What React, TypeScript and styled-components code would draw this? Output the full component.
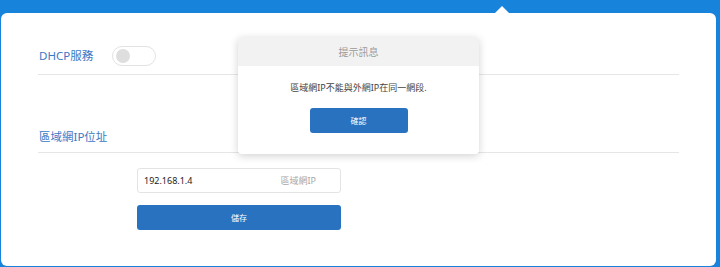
import * as React from "react";
import { FC } from "react";
import styled, { createGlobalStyle } from "styled-components";

const GlobalStyle = createGlobalStyle`
  html, body {
    margin: 0;
    padding: 0;
    background: #1883db;
  }

  body {
    font-family: "Noto Sans", "Noto Sans CJK TC", sans-serif;
  }
`;

const Page = styled.div`
  position: relative;
  height: 267px;
  box-sizing: border-box;
  padding: 13px 4px 1px 1px;
`;

const Caret = styled.div`
  position: absolute;
  left: 495px;
  top: 6px;
  width: 0;
  height: 0;
  border-left: 7px solid transparent;
  border-right: 7px solid transparent;
  border-bottom: 7px solid #ffffff;
`;

const Card = styled.div`
  height: 100%;
  box-sizing: border-box;
  background: #ffffff;
  border-radius: 6px;
  padding: 33px 37px 0 37px;
`;

const Row = styled.div<{ $gap?: number }>`
  display: flex;
  align-items: center;
  gap: ${(p) => p.$gap ?? 0}px;
  padding-bottom: 8px;
  border-bottom: 1px solid #e6e6e6;
`;

const Section = styled.div`
  margin-top: 55px;
`;

const Label = styled.span`
  color: #3b79c4;
  font-size: 11.5px;
  line-height: 14px;
  padding-left: 1px;
`;

const Toggle = styled.div`
  position: relative;
  width: 44px;
  height: 20px;
  box-sizing: border-box;
  border: 1px solid #e2e2e2;
  border-radius: 10px;
  background: #ffffff;
`;

const Knob = styled.div`
  position: absolute;
  left: 3px;
  top: 2px;
  width: 14px;
  height: 14px;
  border-radius: 50%;
  background: #dedede;
`;

const Form = styled.div`
  display: flex;
  flex-direction: column;
  gap: 12px;
  width: 204px;
  margin: 15px 0 0 99px;
`;

const Field = styled.div`
  display: flex;
  align-items: center;
  justify-content: space-between;
  height: 25px;
  box-sizing: border-box;
  border: 1px solid #e4e4e4;
  border-radius: 3px;
  padding: 0 24px 0 6px;
  font-size: 9px;
`;

const Value = styled.span`
  color: #222222;
`;

const Hint = styled.span`
  color: #a8a8a8;
`;

const Button = styled.button<{ $width?: number }>`
  width: ${(p) => (p.$width ? `${p.$width}px` : "100%")};
  height: 25px;
  border: none;
  border-radius: 3px;
  background: #2872c0;
  color: #ffffff;
  font-family: inherit;
  font-size: 8px;
  padding: 0;
`;

const Dialog = styled.div`
  position: absolute;
  left: 238px;
  top: 37px;
  width: 241px;
  height: 117px;
  background: #ffffff;
  border-radius: 4px;
  box-shadow: 0 2px 8px rgba(0, 0, 0, 0.18);
  overflow: hidden;
  display: flex;
  flex-direction: column;
`;

const DialogHead = styled.div`
  height: 29px;
  display: flex;
  align-items: center;
  justify-content: center;
  background: #f2f2f2;
  color: #9a9a9a;
  font-size: 10px;
`;

const DialogBody = styled.div`
  flex: 1;
  display: flex;
  flex-direction: column;
  align-items: center;
  padding-top: 15px;
  gap: 13px;
`;

const Message = styled.p`
  margin: 0;
  color: #444444;
  font-size: 9px;
  line-height: 14px;
`;

const App: FC = () => {
  return (
    <Page>
      <GlobalStyle />
      <Caret />
      <Card>
        <Row $gap={19}>
          <Label>DHCP服務</Label>
          <Toggle>
            <Knob />
          </Toggle>
        </Row>
        <Section>
          <Row>
            <Label>區域網IP位址</Label>
          </Row>
          <Form>
            <Field>
              <Value>192.168.1.4</Value>
              <Hint>區域網IP</Hint>
            </Field>
            <Button>儲存</Button>
          </Form>
        </Section>
      </Card>
      <Dialog>
        <DialogHead>提示訊息</DialogHead>
        <DialogBody>
          <Message>區域網IP不能與外網IP在同一網段.</Message>
          <Button $width={98}>確認</Button>
        </DialogBody>
      </Dialog>
    </Page>
  );
};

export default App;
